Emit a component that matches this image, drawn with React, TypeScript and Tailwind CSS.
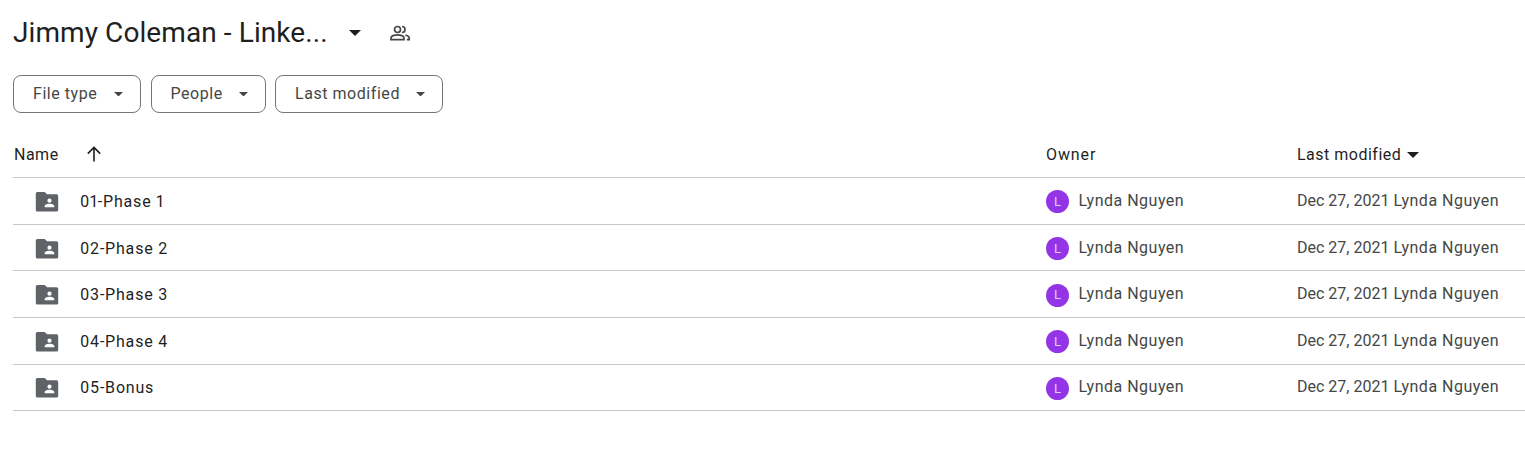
const font = "font-['Roboto',sans-serif]"

const rows = ["01-Phase 1", "02-Phase 2", "03-Phase 3", "04-Phase 4", "05-Bonus"]
const filters = [
  { label: "File type", width: "w-[128px]" },
  { label: "People", width: "w-[115px]" },
  { label: "Last modified", width: "w-[168px]" },
]

const Caret = ({ className }: { className: string }) => (
  <svg className={className} viewBox="0 0 10 5" fill="currentColor">
    <path d="M0 0h10L5 5z" />
  </svg>
)

const SharedFolder = () => (
  <svg className="w-[24px] h-[24px] text-[#5f6368]" viewBox="0 0 24 24" fill="currentColor">
    <path
      fillRule="evenodd"
      d="M2.4 2h6.9a1 1 0 0 1 .7.3l2 2h9.6a1.6 1.6 0 0 1 1.6 1.6V20a1.6 1.6 0 0 1-1.6 1.6H2.4A1.6 1.6 0 0 1 .8 20V3.6A1.6 1.6 0 0 1 2.4 2zm12.1 6.6a2.1 2.1 0 1 0 0 4.2 2.1 2.1 0 0 0 0-4.2zm-4.8 8.6h9.6v-1.2c0-1.5-3.1-2.3-4.8-2.3s-4.8.8-4.8 2.3z"
    />
  </svg>
)

const SharedIcon = () => (
  <svg className="w-[22px] h-[22px] text-[#444746]" viewBox="0 0 22 22" fill="none" stroke="currentColor" strokeWidth="1.7">
    <circle cx="8.5" cy="7.5" r="3" />
    <path d="M2 17.6v-1.8c0-1.9 3.6-3 6.5-3s6.5 1.1 6.5 3v1.8z" />
    <path d="M13 4.5a3 3 0 0 1 0 6" />
    <path d="M16.4 13c2 .5 3.8 1.5 3.8 3v1.6h-2.4" />
  </svg>
)

export default function App() {
  return (
    <div className={`${font} bg-white h-[455px] w-[1525px] overflow-hidden pl-[13px] text-[#1f1f1f]`}>
      <div className="flex items-center h-[66px]">
        <h1 className="text-[28px] font-normal w-[336px] tracking-[0.09px] whitespace-nowrap">Jimmy Coleman - Linke...</h1>
        <Caret className="w-[12px] h-[6px] text-[#1f1f1f]" />
        <div className="ml-[28px]">
          <SharedIcon />
        </div>
      </div>

      <div className="flex gap-[9.5px] mt-[9px]">
        {filters.map((f) => (
          <div
            key={f.label}
            className={`${f.width} h-[38px] flex items-center justify-between pl-[19px] pr-[17px] border border-[#747775] rounded-[8px] text-[#444746] text-[16px] tracking-[0.55px]`}
          >
            <span>{f.label}</span>
            <Caret className="w-[9px] h-[4.5px] text-[#444746]" />
          </div>
        ))}
      </div>

      <div className="flex items-center h-[46.2px] mt-[19px] border-b border-[#c7c7c7] text-[16px] tracking-[0.5px]">
        <div className="w-[1033px] flex items-center">
          <span className="ml-[1px]">Name</span>
          <svg className="w-[20px] h-[20px] ml-[25px] mb-[2px]" viewBox="0 0 20 20" fill="none" stroke="currentColor" strokeWidth="1.6">
            <path d="M10 17.5V3.5M3.8 9.6 10 3.4l6.2 6.2" />
          </svg>
        </div>
        <div className="w-[251px] tracking-[0.9px]">Owner</div>
        <div className="flex items-center gap-[6px]">
          <span>Last modified</span>
          <Caret className="w-[12px] h-[6px]" />
        </div>
      </div>

      {rows.map((name) => (
        <div key={name} className="flex items-center h-[46.6px] pt-[2px] border-b border-[#c7c7c7]">
          <div className="w-[1033px] flex items-center">
            <div className="ml-[22px]">
              <SharedFolder />
            </div>
            <span className="ml-[21px] text-[16px] tracking-[0.8px] proportional-nums">{name}</span>
          </div>
          <div className="w-[251px] flex items-center text-[#444746] text-[16px]">
            <div className="w-[23px] h-[23px] rounded-full bg-[#9334e6] text-[#e4ccfa] text-[13px] flex items-center justify-center">L</div>
            <span className="ml-[9.5px] mb-[2px] tracking-[0.5px]">Lynda Nguyen</span>
          </div>
          <div className="mb-[2px] text-[#444746] text-[16px] whitespace-nowrap">
            Dec 27, 2021 <span className="tracking-[0.5px]">Lynda Nguyen</span>
          </div>
        </div>
      ))}
    </div>
  )
}
